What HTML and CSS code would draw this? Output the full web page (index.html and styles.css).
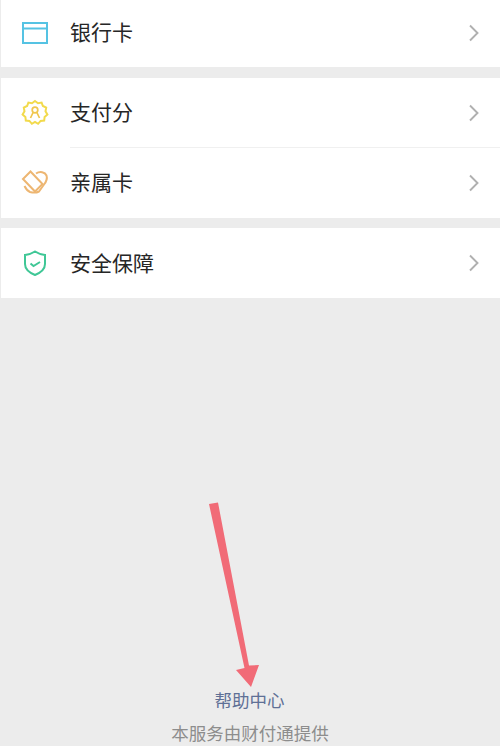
FILE: index.html
```html
<!DOCTYPE html>
<html lang="zh-CN">
<head>
  <meta charset="UTF-8">
  <meta name="viewport" content="width=device-width, initial-scale=1.0">
  <title>支付管理</title>
  <link rel="stylesheet" href="styles.css">
</head>
<body>

  <div class="group group-first">
    <div class="row row-first">
      <svg class="icon" viewBox="0 0 30 30"><rect x="3" y="5" width="24" height="20" fill="none" stroke="#55c3e3" stroke-width="2"/><path d="M4 10.5h22" stroke="#55c3e3" stroke-width="2"/></svg>
      <span class="label">银行卡</span>
      <svg class="chevron" viewBox="0 0 12 18"><path d="M2 1.500l7.500 7.500-7.500 7.500" fill="none" stroke="#b0b0b0" stroke-width="1.900"/></svg>
    </div>
  </div>

  <div class="group">
    <div class="row">
      <svg class="icon" viewBox="0 0 30 30"><path d="M15 3l3 2.200 3.600-.6 1.300 3.400 3.300 1.600-.7 3.600 1.900 3.300-2.800 2.400-.4 3.600-3.600.4-2.500 2.900-3.100-1.900-3.100 1.900-2.500-2.900-3.600-.4-.4-3.600-2.800-2.400 1.900-3.300-.7-3.600 3.300-1.600 1.300-3.400 3.600.6z" fill="none" stroke="#f2da4c" stroke-width="2"/><circle cx="15" cy="12" r="2.800" fill="none" stroke="#f0c64e" stroke-width="1.700"/><path d="M10.500 20l2.600-5.500M19.500 20l-2.600-5.500" fill="none" stroke="#f0c64e" stroke-width="1.700"/></svg>
      <span class="label">支付分</span>
      <svg class="chevron" viewBox="0 0 12 18"><path d="M2 1.500l7.500 7.500-7.500 7.500" fill="none" stroke="#b0b0b0" stroke-width="1.900"/></svg>
    </div>
    <div class="row">
      <svg class="icon" viewBox="0 0 30 30"><path d="M10.500 3.500L3 11l12 12.500 7.500-7.500z" fill="none" stroke="#edb672" stroke-width="2"/><path d="M16 5.500c4-2.500 9-1.500 10.500 2 1 3-.5 6.500-2.500 9l-5 7c-2 1-5 1.500-9 .5-2.500-1-4-3-5.500-6" fill="none" stroke="#edb672" stroke-width="2"/></svg>
      <span class="label">亲属卡</span>
      <svg class="chevron" viewBox="0 0 12 18"><path d="M2 1.500l7.500 7.500-7.500 7.500" fill="none" stroke="#b0b0b0" stroke-width="1.900"/></svg>
    </div>
  </div>

  <div class="group">
    <div class="row">
      <svg class="icon" viewBox="0 0 30 30"><path d="M15 3.500c3 2 6 3 10 3.500v9c0 5-4 8.500-10 11-6-2.500-10-6-10-11V7c4-.5 7-1.500 10-3.500z" fill="none" stroke="#3fc796" stroke-width="2"/><path d="M10.500 15.500l3 2.500 6.500-4" fill="none" stroke="#3fc796" stroke-width="2"/></svg>
      <span class="label label-low">安全保障</span>
      <svg class="chevron" viewBox="0 0 12 18"><path d="M2 1.500l7.500 7.500-7.500 7.500" fill="none" stroke="#b0b0b0" stroke-width="1.900"/></svg>
    </div>
  </div>

  <div class="footer">
    <a class="help">帮助中心</a>
    <p class="provider">本服务由财付通提供</p>
  </div>

  <!-- annotation drawn over the screenshot -->
  <svg class="arrow" viewBox="0 0 500 746"><path d="M209 504l9-1.500 31 163 10-.5-8 22-15-17 8.500-2z" fill="#f16b77"/></svg>

</body>
</html>
```

FILE: styles.css
```css
html, body {
  margin: 0;
  height: 100%;
}
body {
  position: relative;
  display: flex;
  flex-direction: column;
  width: 500px;
  height: 746px;
  overflow: hidden;
  background: #ececec;
  font-family: "Liberation Sans", "Noto Sans CJK SC", sans-serif;
}
.group {
  margin-top: 10px;
  margin-left: 1px;
  background: #fff;
}
.group-first {
  margin-top: 0;
}
.row {
  display: flex;
  align-items: center;
  height: 70px;
  padding-left: 19px;
  padding-right: 20px;
}
.row-first {
  height: 67px;
  padding-bottom: 1px;
  box-sizing: border-box;
}
.group:nth-child(2) {
  margin-top: 11px;
}
.group .row + .row {
  position: relative;
}
.group .row + .row::before {
  content: "";
  position: absolute;
  top: -1px;
  left: 69px;
  right: 0;
  height: 1px;
  background: #f0f0f0;
}
.icon {
  width: 30px;
  height: 30px;
  flex: none;
}
.label {
  margin-left: 20px;
  padding-bottom: 4px;
  flex: 1;
  font-size: 21px;
  color: #262626;
}
.label-low {
  padding-bottom: 2px;
}
.chevron {
  width: 12px;
  height: 18px;
  flex: none;
}
.footer {
  margin-top: auto;
  text-align: center;
  font-size: 17.5px;
  height: 58px;
}
.help {
  display: block;
  color: #5f7096;
  line-height: 26px;
  margin-left: -1px;
}
.provider {
  margin: 8px 0 0;
  color: #8d8d8d;
  line-height: 24px;
}
.arrow {
  position: absolute;
  left: 0;
  top: 0;
  width: 500px;
  height: 746px;
  pointer-events: none;
}
```
